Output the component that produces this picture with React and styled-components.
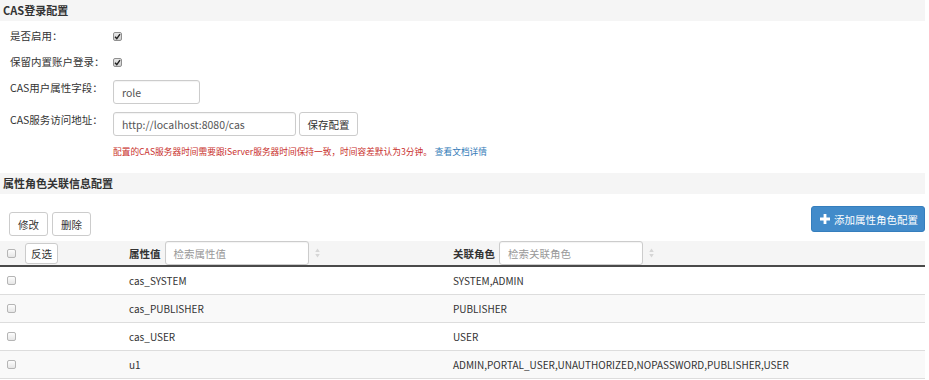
import React from 'react';
import styled, { createGlobalStyle } from 'styled-components';

const GlobalStyle = createGlobalStyle`
  html, body { margin: 0; padding: 0; background: #fff; }
  body {
    font-family: "Noto Sans CJK SC", "Noto Sans", sans-serif;
    font-size: 10.5px;
    color: #333;
  }
  * { box-sizing: border-box; }
`;

const Page = styled.div`
  width: 925px;
`;

const SectionTitle = styled.div`
  height: 21px;
  line-height: 21px;
  padding-left: 3px;
  background: #f5f5f5;
  font-weight: bold;
  font-size: 11px;
  color: #333;
  margin-top: ${p => p.$mt || 0}px;
`;

const Form = styled.div`
  padding-left: 10px;
`;

const FormRow = styled.div`
  display: flex;
  align-items: flex-start;
  margin-top: ${p => p.$mt}px;
`;

const Label = styled.div`
  width: 103px;
  line-height: 16px;
  color: #333;
`;

const CheckBox = styled.span`
  display: inline-flex;
  align-items: center;
  justify-content: center;
  width: 9px;
  height: 9px;
  margin-top: ${p => p.$mt || 0}px;
  border: 1px solid ${p => (p.$checked ? '#8f8f8f' : '#b5b5b5')};
  border-radius: 2px;
  background: ${p => (p.$checked ? 'linear-gradient(#e8e8e8, #cfcfcf)' : 'linear-gradient(#fdfdfd, #e6e6e6)')};
  flex-shrink: 0;
`;

const Input = styled.div`
  width: ${p => p.$w}px;
  height: 24px;
  border: 1px solid #ccc;
  border-radius: 3px;
  padding: 0 8px;
  display: flex;
  align-items: center;
  color: ${p => (p.$placeholder ? '#999' : '#555')};
  font-size: 10.5px;
  background: #fff;
  box-shadow: inset 0 1px 1px rgba(0,0,0,0.05);
`;

const Button = styled.button`
  height: ${p => p.$h || 24}px;
  width: ${p => p.$w}px;
  margin-left: ${p => p.$ml || 0}px;
  padding: 0;
  border: 1px solid #ccc;
  border-radius: 3px;
  background: #fff;
  color: #333;
  font-family: inherit;
  font-size: 10.5px;
  display: inline-flex;
  align-items: center;
  justify-content: center;
`;

const PrimaryButton = styled.button`
  height: 26px;
  width: 114px;
  padding: 0 0 0 2px;
  border: 1px solid #357ebd;
  border-radius: 3px;
  background: #428bca;
  color: #fff;
  font-family: inherit;
  font-size: 10.5px;
  display: inline-flex;
  align-items: center;
  justify-content: center;
  gap: 4px;
`;

const Note = styled.div`
  margin-top: 9px;
  padding-left: 103px;
  font-size: 8.7px;
  line-height: 14px;
  color: #c9302c;
`;

const Link = styled.a`
  color: #337ab7;
  text-decoration: none;
  margin-left: 3px;
`;

const Toolbar = styled.div`
  display: flex;
  justify-content: space-between;
  align-items: flex-start;
  padding: 12px 0 0 9px;
`;

const ButtonGroup = styled.div`
  display: flex;
  gap: 4px;
  margin-top: 6px;
`;

const Table = styled.table`
  width: 100%;
  margin-top: 5px;
  border-collapse: collapse;
  table-layout: fixed;
`;

const HeadRow = styled.tr`
  background: #f5f5f5;
  border-bottom: 2px solid #4a4a4a;
`;

const Th = styled.th`
  height: 25px;
  padding: 0 0 0 ${p => p.$pl || 8}px;
  text-align: left;
  vertical-align: middle;
  font-weight: normal;
  width: ${p => (p.$w ? `${p.$w}px` : 'auto')};
`;

const HeadCell = styled.div`
  display: flex;
  align-items: center;
`;

const HeadLabel = styled.span`
  font-weight: bold;
  font-size: 10.5px;
  margin-right: 4px;
`;

const SortIcon = styled.svg`
  margin-left: 6px;
  flex-shrink: 0;
`;

const Row = styled.tr`
  background: ${p => (p.$striped ? '#f9f9f9' : '#fff')};
  border-bottom: 1px solid #ddd;
`;

const Td = styled.td`
  height: 28px;
  padding: 0 0 0 ${p => p.$pl || 8}px;
  vertical-align: middle;
  color: #333;
  font-size: 10px;
  white-space: nowrap;
`;

const Check = ({ checked, mt }) => (
  <CheckBox $checked={checked} $mt={mt}>
    {checked && (
      <svg width="7" height="7" viewBox="0 0 7 7">
        <path d="M1 3.8 L2.8 5.6 L6 1.2" fill="none" stroke="#222" strokeWidth="1.4" />
      </svg>
    )}
  </CheckBox>
);

const Sort = () => (
  <SortIcon width="5" height="10" viewBox="0 0 5 10">
    <path d="M2.5 0.5 L4.8 4 L0.2 4 Z" fill="#d6d6d6" />
    <path d="M2.5 9.5 L4.8 6 L0.2 6 Z" fill="#d6d6d6" />
  </SortIcon>
);

const rows = [
  ['cas_SYSTEM', 'SYSTEM,ADMIN'],
  ['cas_PUBLISHER', 'PUBLISHER'],
  ['cas_USER', 'USER'],
  ['u1', 'ADMIN,PORTAL_USER,UNAUTHORIZED,NOPASSWORD,PUBLISHER,USER'],
];

export default function App() {
  return (
    <Page>
      <GlobalStyle />
      <SectionTitle>CAS登录配置</SectionTitle>
      <Form>
        <FormRow $mt={7}>
          <Label>是否启用：</Label>
          <Check checked mt={4} />
        </FormRow>
        <FormRow $mt={10}>
          <Label>保留内置账户登录：</Label>
          <Check checked mt={4} />
        </FormRow>
        <FormRow $mt={10}>
          <Label>CAS用户属性字段：</Label>
          <Input $w={87}>role</Input>
        </FormRow>
        <FormRow $mt={8}>
          <Label>CAS服务访问地址：</Label>
          <Input $w={183}>http://localhost:8080/cas</Input>
          <Button $w={59} $ml={3}>保存配置</Button>
        </FormRow>
        <Note>
          配置的CAS服务器时间需要跟iServer服务器时间保持一致，时间容差默认为3分钟。
          <Link href="#">查看文档详情</Link>
        </Note>
      </Form>
      <SectionTitle $mt={14}>属性角色关联信息配置</SectionTitle>
      <Toolbar>
        <ButtonGroup>
          <Button $w={39}>修改</Button>
          <Button $w={39}>删除</Button>
        </ButtonGroup>
        <PrimaryButton>
          <svg width="10" height="10" viewBox="0 0 10 10">
            <path d="M3.6 0 H6.4 V3.6 H10 V6.4 H6.4 V10 H3.6 V6.4 H0 V3.6 H3.6 Z" fill="#fff" />
          </svg>
          添加属性角色配置
        </PrimaryButton>
      </Toolbar>
      <Table>
        <thead>
          <HeadRow>
            <Th $w={121} $pl={7}>
              <HeadCell>
                <Check />
                <Button $w={33} $h={21} $ml={9}>反选</Button>
              </HeadCell>
            </Th>
            <Th $w={324}>
              <HeadCell>
                <HeadLabel>属性值</HeadLabel>
                <Input $w={144} $placeholder>检索属性值</Input>
                <Sort />
              </HeadCell>
            </Th>
            <Th>
              <HeadCell>
                <HeadLabel>关联角色</HeadLabel>
                <Input $w={144} $placeholder>检索关联角色</Input>
                <Sort />
              </HeadCell>
            </Th>
          </HeadRow>
        </thead>
        <tbody>
          {rows.map(([a, b], i) => (
            <Row key={a} $striped={i % 2 === 1}>
              <Td $pl={7}><Check /></Td>
              <Td>{a}</Td>
              <Td>{b}</Td>
            </Row>
          ))}
        </tbody>
      </Table>
    </Page>
  );
}
